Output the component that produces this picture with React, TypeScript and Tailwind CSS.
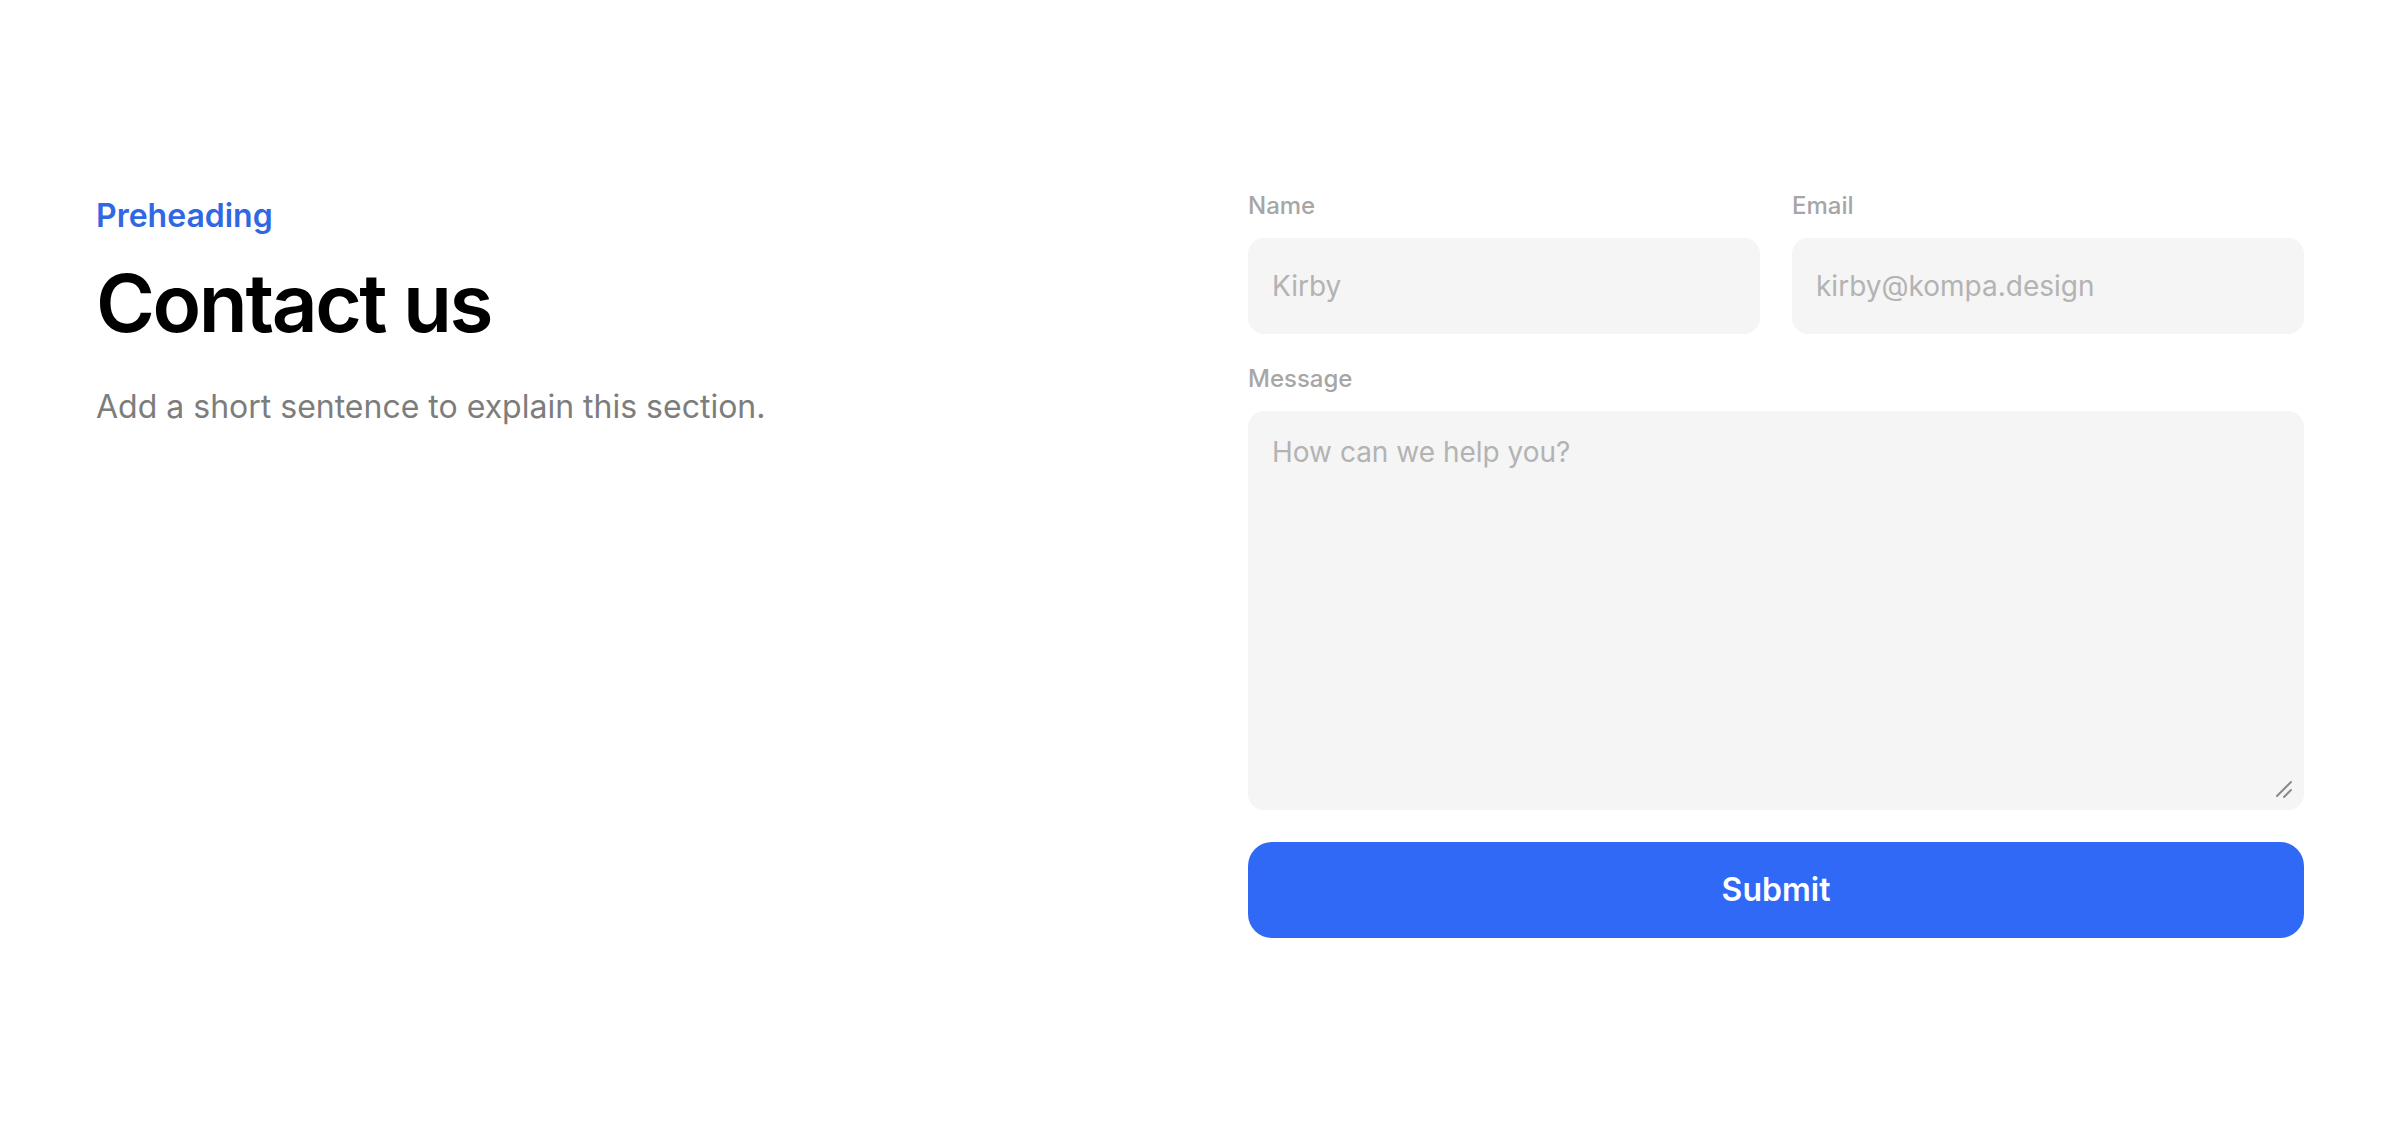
import React from 'react';

const labelCls = 'text-2xl leading-none font-medium text-[#a6a6a6]';
const fieldCls =
  'w-full rounded-2xl bg-[#f5f5f5] px-6 text-[28px] text-[#333] placeholder:text-[#b3b3b3] outline-none';

export default function App() {
  return (
    <div className="min-h-screen bg-white font-['Inter',sans-serif]">
      <section className="grid grid-cols-2 gap-24 px-24 pt-[194px]">
        <div className="flex flex-col">
          <p className="text-[32px] leading-[43px] font-semibold text-[#3068e4]">Preheading</p>
          <h1 className="mt-[26px] text-[80px] leading-none font-semibold tracking-[-0.03em] text-black">
            Contact us
          </h1>
          <p className="mt-10 text-[32px] leading-[48px] text-[#7d7d7d]">
            Add a short sentence to explain this section.
          </p>
        </div>

        <form className="flex flex-col gap-8" onSubmit={(e) => e.preventDefault()}>
          <div className="grid grid-cols-2 gap-8">
            <label className="flex flex-col gap-5">
              <span className={labelCls}>Name</span>
              <input type="text" placeholder="Kirby" className={`${fieldCls} h-24`} />
            </label>
            <label className="flex flex-col gap-5">
              <span className={labelCls}>Email</span>
              <input type="email" placeholder="kirby@kompa.design" className={`${fieldCls} h-24`} />
            </label>
          </div>
          <label className="mt-px flex flex-col gap-5">
            <span className={labelCls}>Message</span>
            <div className="relative">
              <textarea
                placeholder="How can we help you?"
                className={`${fieldCls} block h-[399px] resize-none pt-5 leading-[42px]`}
              />
              {/* resize grip */}
              <svg
                className="pointer-events-none absolute right-[10px] bottom-[10px] h-5 w-5"
                viewBox="0 0 20 20"
                fill="none"
                stroke="#8a8a8a"
                strokeWidth="2"
                strokeLinecap="round"
              >
                <path d="M17 2L3 16" />
                <path d="M17 10L10 17" />
              </svg>
            </div>
          </label>
          <button
            type="submit"
            className="h-24 w-full rounded-3xl bg-[#2f69f6] text-[32px] font-semibold text-white"
          >
            Submit
          </button>
        </form>
      </section>
    </div>
  );
}
